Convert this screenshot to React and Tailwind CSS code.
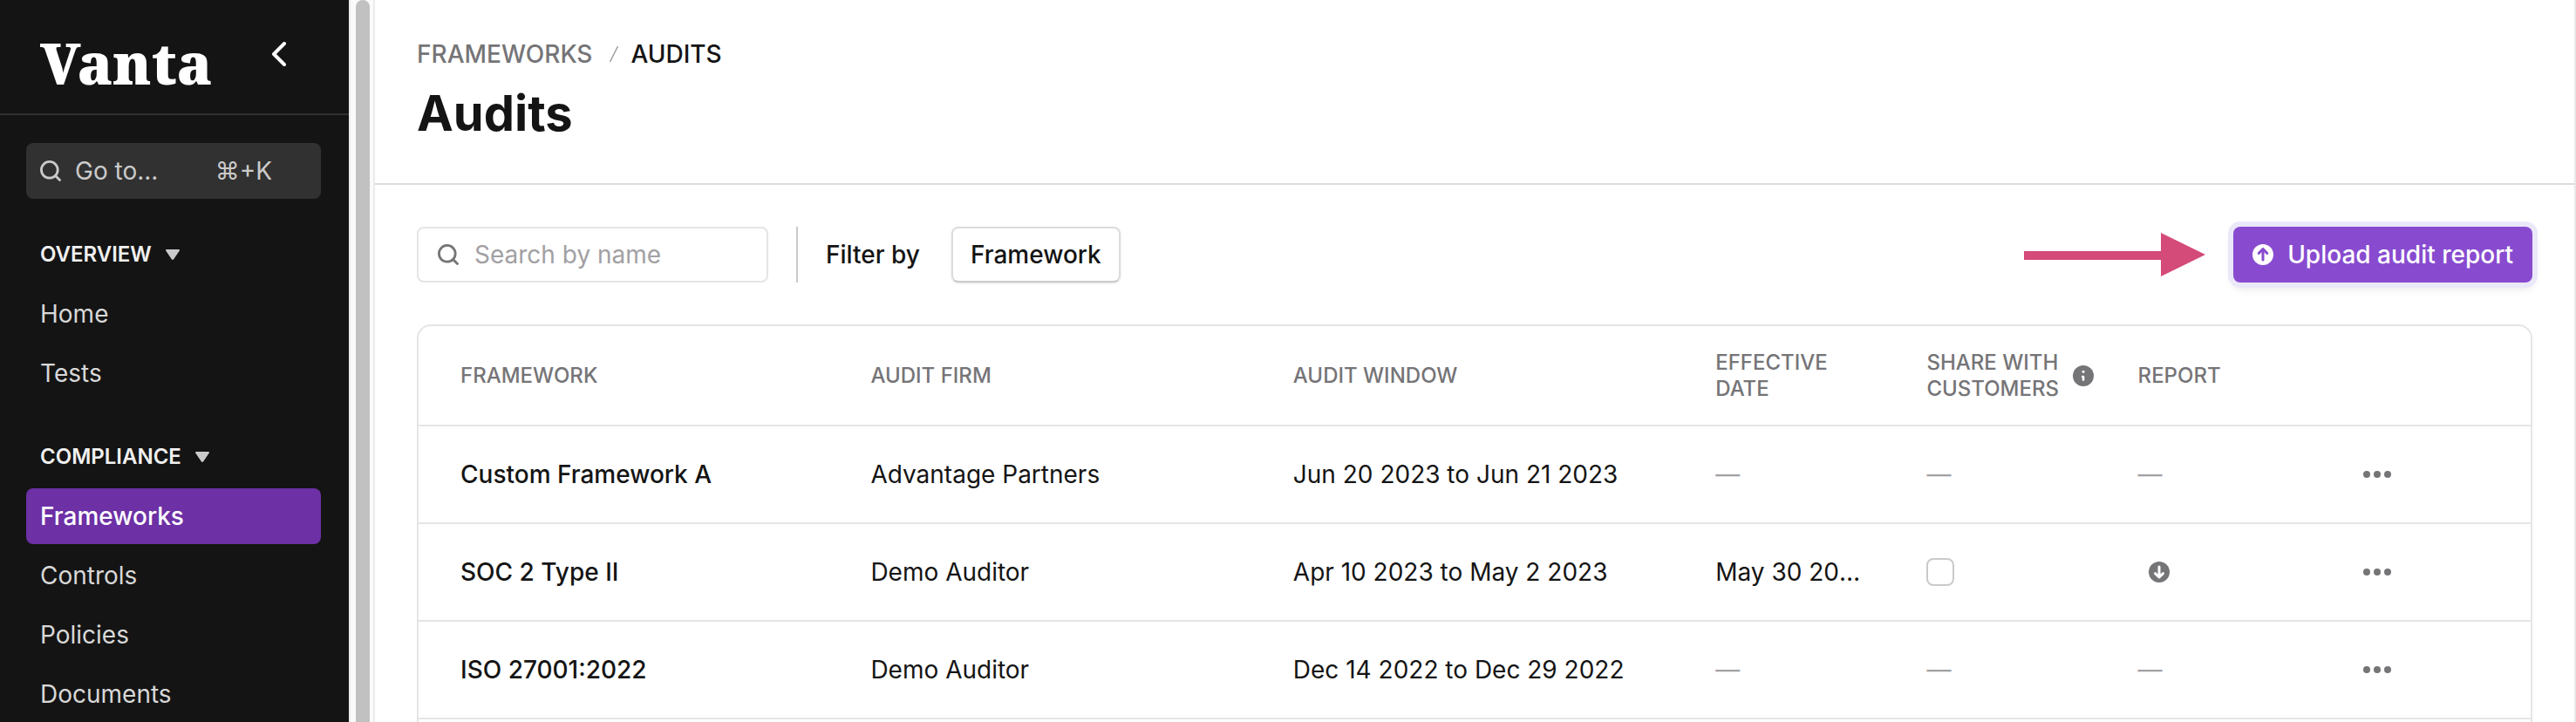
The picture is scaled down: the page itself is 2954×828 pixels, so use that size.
import React from 'react';

const rows = [
  { name: 'Custom Framework A', firm: 'Advantage Partners', window: 'Jun 20 2023 to Jun 21 2023' },
  { name: 'SOC 2 Type II', firm: 'Demo Auditor', window: 'Apr 10 2023 to May 2 2023', date: 'May 30 2023', report: true },
  { name: 'ISO 27001:2022', firm: 'Demo Auditor', window: 'Dec 14 2022 to Dec 29 2022' },
];

function SearchIcon({ className }) {
  return (
    <svg viewBox="0 0 24 24" fill="none" stroke="currentColor" strokeWidth="2.8" className={className} aria-hidden="true">
      <circle cx="10.8" cy="10.8" r="9.4" />
      <path d="M17.5 17.5 22.5 22.5" strokeLinecap="round" />
    </svg>
  );
}

function CircleArrow({ className, down, arrow }) {
  return (
    <svg viewBox="0 0 24 24" className={className} aria-hidden="true">
      <circle cx="12" cy="12" r="12" fill="currentColor" />
      <path
        d={down ? 'M12 6v12M7.5 13.7 12 18l4.5-4.3' : 'M12 18V5.5M7.2 10.5l4.8-5 4.8 5'}
        fill="none" stroke={arrow} strokeWidth="3" strokeLinecap="round" strokeLinejoin="round"
      />
    </svg>
  );
}

function NavGroup({ title, items, active }) {
  return (
    <section>
      <button type="button" className="mb-1 flex h-16 items-center gap-4 pl-4 text-2xl font-semibold text-[#f0f0f0]">
        {title}
        <svg viewBox="0 0 16 12" className="h-3 w-4 text-[#cacacc]" fill="currentColor" aria-hidden="true">
          <path d="M1 0h14a1 1 0 0 1 .8 1.6l-6.6 9.6a1.5 1.5 0 0 1-2.4 0L.2 1.6A1 1 0 0 1 1 0z" />
        </svg>
      </button>
      <ul className="flex flex-col gap-1">
        {items.map((item) => (
          <li key={item}>
            <a
              href="#"
              className={
                item === active
                  ? 'flex h-16 items-center rounded-lg bg-[#6d30a5] pl-4 font-medium text-white'
                  : 'flex h-16 items-center rounded-lg pl-4 text-[#d8d8d8]'
              }
            >
              {item}
            </a>
          </li>
        ))}
      </ul>
    </section>
  );
}

const Dash = () => <span className="text-[#a1a0a3]">—</span>;

export default function App() {
  return (
    <div className="flex h-screen overflow-hidden bg-white font-[Inter,sans-serif] text-[28px] leading-10 text-[#141414]">
      <aside className="flex w-[400px] shrink-0 flex-col overflow-hidden bg-[#141414]">
        <div className="flex h-[132px] shrink-0 items-start justify-between border-b-2 border-[#313131] pt-10 pr-[70px] pl-[46px]">
          <a href="#" className="font-['Noto_Serif','DejaVu_Serif',serif] text-[65px] leading-[64px] font-black text-white">Vanta</a>
          <button type="button" aria-label="Collapse sidebar" className="pt-2 text-white">
            <svg viewBox="0 0 20 28" className="h-7 w-5" fill="none" stroke="currentColor" strokeWidth="4" strokeLinecap="round" strokeLinejoin="round" aria-hidden="true">
              <path d="M16 2 4 14l12 12" />
            </svg>
          </button>
        </div>
        <nav className="flex flex-col gap-8 pt-8 pr-8 pl-[30px]">
          <button type="button" className="flex h-16 items-center rounded-lg bg-[#313131] px-4 text-[#cacaca]">
            <SearchIcon className="mr-4 size-6" />
            <span>Go to...</span>
            <span className="mr-10 ml-auto">⌘+K</span>
          </button>
          <NavGroup title="OVERVIEW" items={['Home', 'Tests']} />
          <NavGroup title="COMPLIANCE" active="Frameworks" items={['Frameworks', 'Controls', 'Policies', 'Documents']} />
        </nav>
      </aside>

      <div className="w-[30px] shrink-0 border-x-2 border-[#ebebeb] bg-[#fafafa] px-[6px]">
        <div className="h-full w-4 rounded-t-full bg-[#c1c1c1]" />
      </div>

      <main className="flex min-w-0 grow flex-col border-r-2 border-[#e8e8e8]">
        <header className="shrink-0 border-b-2 border-[#dcdcdc] px-12 pt-[42px] pb-11">
          <nav aria-label="Breadcrumb" className="flex items-center font-medium">
            <a href="#" className="text-[#757477]">FRAMEWORKS</a>
            <svg viewBox="0 0 10 20" className="mr-[14px] ml-5 h-5 w-[10px]" stroke="#a1a0a3" strokeWidth="1.5" aria-hidden="true">
              <path d="M9.5 1 .5 19" />
            </svg>
            <span>AUDITS</span>
          </nav>
          <h1 className="pt-3 text-[56px] leading-[72px] font-bold">Audits</h1>
        </header>

        <div className="flex shrink-0 items-center px-12 pt-12">
          <label className="flex h-16 w-[403px] items-center gap-[18px] rounded-lg border-2 border-[#e5e5e5] px-[22px]">
            <SearchIcon className="size-6 shrink-0 text-[#757477]" />
            <input type="text" aria-label="Search by name" placeholder="Search by name" className="w-full min-w-0 bg-transparent outline-none placeholder:text-[#a1a0a3]" />
          </label>
          <div className="mx-8 h-16 w-[2px] bg-[#cacacc]" />
          <span className="font-medium">Filter by</span>
          <button type="button" className="ml-9 h-16 rounded-lg border-2 border-[#dcdcdc] border-b-[#cacacc] px-5 font-medium shadow-sm">Framework</button>
          <svg viewBox="0 0 208 50" className="mr-8 ml-auto h-[50px] w-[208px]" fill="#d44a78" aria-hidden="true">
            <path d="M0 21h157V0l51 25-51 25V31H0z" />
          </svg>
          <button type="button" className="flex h-16 items-center gap-4 rounded-lg bg-[#884bd0] px-[22px] font-medium text-white shadow-[0_0_0_6px_#ebe8f9,0_6px_12px_rgba(0,0,0,0.12)]">
            <CircleArrow className="size-6" arrow="#884bd0" />
            Upload audit report
          </button>
        </div>

        <div className="mx-12 mt-12 grow rounded-t-2xl border-2 border-b-0 border-[#e5e5e5]">
          <table className="w-full table-fixed border-collapse text-left">
            <thead>
              <tr className="h-[114px] border-b-2 border-[#e5e5e5] text-2xl leading-[30px] text-[#757477] [&>th]:pl-[34px] [&>th]:font-medium [&>th:first-child]:pl-12">
                <th className="w-[20%]">FRAMEWORK</th>
                <th className="w-[20%]">AUDIT FIRM</th>
                <th className="w-[20%]">AUDIT WINDOW</th>
                <th className="w-[10%]">EFFECTIVE<br />DATE</th>
                <th className="w-[10%]">
                  <div className="flex items-center gap-4">
                    <span>SHARE WITH<br />CUSTOMERS</span>
                    <svg viewBox="0 0 24 24" className="size-6 shrink-0" aria-hidden="true">
                      <circle cx="12" cy="12" r="12" fill="currentColor" />
                      <circle cx="12" cy="7.3" r="1.5" fill="#fff" />
                      <path d="M11.2 13H12v3.6" fill="none" stroke="#fff" strokeWidth="2.6" strokeLinecap="round" strokeLinejoin="round" />
                    </svg>
                  </div>
                </th>
                <th className="w-[10%]">REPORT</th>
                <th className="w-[10%]" aria-label="Actions" />
              </tr>
            </thead>
            <tbody>
              {rows.map((row) => (
                <tr key={row.name} className="h-28 border-b-2 border-[#e5e5e5] [&>td]:pl-[34px]">
                  <th scope="row" className="pl-12 font-medium">{row.name}</th>
                  <td>{row.firm}</td>
                  <td>{row.window}</td>
                  <td><div className="truncate pr-10">{row.date || <Dash />}</div></td>
                  <td>
                    {row.report
                      ? <input type="checkbox" aria-label={`Share ${row.name} with customers`} className="block size-8 appearance-none rounded-lg border-2 border-[#cacacc] bg-white" />
                      : <Dash />}
                  </td>
                  <td>
                    {row.report
                      ? <button type="button" aria-label="Download report" className="block pl-3 text-[#757477]"><CircleArrow down arrow="#fff" className="size-6" /></button>
                      : <Dash />}
                  </td>
                  <td>
                    <button type="button" aria-label={`Actions for ${row.name}`} className="block pl-4 text-[#757477]">
                      <svg viewBox="0 0 32 8" className="h-2 w-8" fill="currentColor" aria-hidden="true">
                        <circle cx="4" cy="4" r="4" /><circle cx="16" cy="4" r="4" /><circle cx="28" cy="4" r="4" />
                      </svg>
                    </button>
                  </td>
                </tr>
              ))}
            </tbody>
          </table>
        </div>
      </main>
    </div>
  );
}
